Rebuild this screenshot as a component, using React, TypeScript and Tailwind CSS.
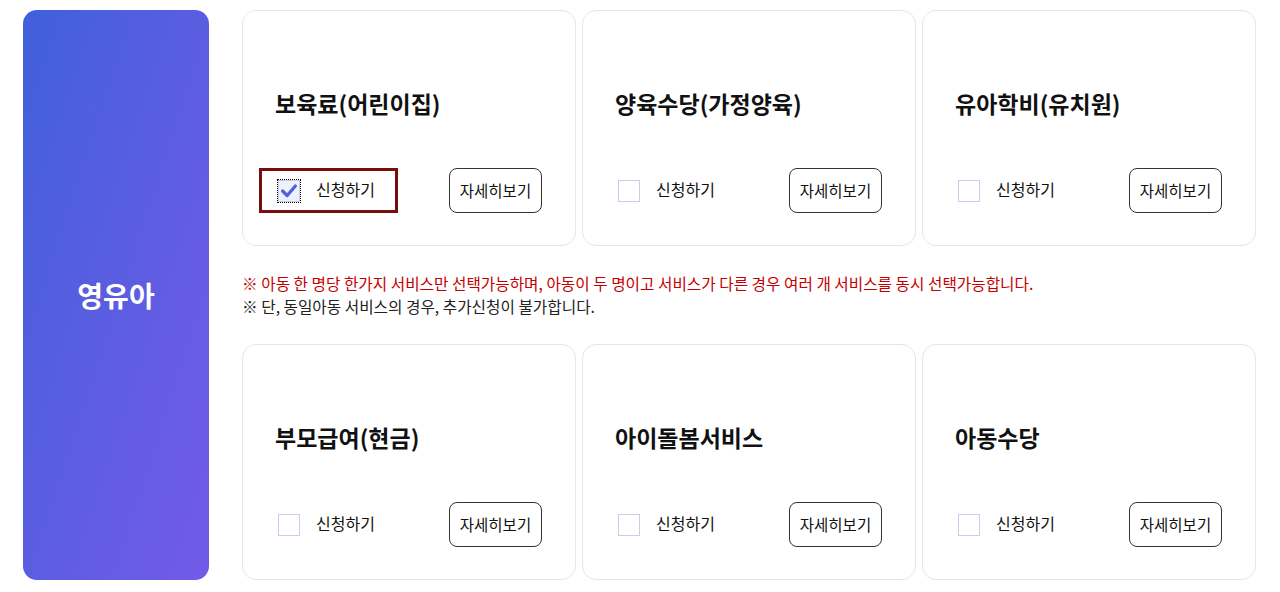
import React, { useState } from "react";

type Service = {
  id: string;
  title: string;
};

const firstRow: Service[] = [
  { id: "care", title: "보육료(어린이집)" },
  { id: "home", title: "양육수당(가정양육)" },
  { id: "kinder", title: "유아학비(유치원)" },
];

const secondRow: Service[] = [
  { id: "parent", title: "부모급여(현금)" },
  { id: "sitter", title: "아이돌봄서비스" },
  { id: "child", title: "아동수당" },
];

const CheckMark = () => (
  <svg viewBox="0 0 22 22" className="w-[22px] h-[22px]">
    <path
      d="M4 11 L9 16 L18 5.5"
      fill="none"
      stroke="#4a63dc"
      strokeWidth="3.6"
      strokeLinecap="round"
      strokeLinejoin="round"
    />
  </svg>
);

const ServiceCard = ({
  service,
  checked,
  focused,
  onToggle,
}: {
  service: Service;
  checked: boolean;
  focused: boolean;
  onToggle: (id: string) => void;
}) => (
  <div className="w-[334px] h-[236px] bg-white border border-[#e6e6e6] rounded-[14px] flex flex-col pt-[76px] pl-[16px] pr-[33px]">
    <h3 className="h-[32px] pl-[16px] text-[23px] leading-[32px] font-bold text-[#111]">
      {service.title}
    </h3>
    <div className="mt-[49px] flex items-center justify-between">
      <label
        className={
          focused
            ? "w-[139px] h-[45px] border-[3px] border-[#7b0c0c] flex items-center pl-[16px] gap-[16px] cursor-pointer"
            : "w-[139px] h-[45px] border-[3px] border-transparent flex items-center pl-[16px] gap-[16px] cursor-pointer"
        }
        onClick={() => onToggle(service.id)}
      >
        <span
          className={
            checked
              ? "w-[22px] h-[22px] bg-[#eef0fb] border border-[#c9cdea] outline-1 outline-dotted outline-black flex items-center justify-center"
              : "w-[22px] h-[22px] bg-white border border-[#c9cdea] flex items-center justify-center"
          }
        >
          {checked && <CheckMark />}
        </span>
        <span className="text-[16px] leading-[20px] pb-[3px] text-[#111]">신청하기</span>
      </label>
      <button className="w-[93px] h-[45px] rounded-lg border border-[#333] bg-white text-[15.5px] text-[#111]">
        자세히보기
      </button>
    </div>
  </div>
);

export default function App() {
  const [selected, setSelected] = useState<string[]>(["care"]);

  const toggle = (id: string) =>
    setSelected((prev) =>
      prev.includes(id) ? prev.filter((s) => s !== id) : [...prev, id]
    );

  const renderRow = (row: Service[]) => (
    <div className="flex gap-[6px]">
      {row.map((s) => (
        <ServiceCard
          key={s.id}
          service={s}
          checked={selected.includes(s.id)}
          focused={s.id === "care"}
          onToggle={toggle}
        />
      ))}
    </div>
  );

  return (
    <div className="w-[1280px] h-[592px] bg-white flex pl-[23px] pt-[10px] font-['Noto_Sans_CJK_KR','Noto_Sans',sans-serif]">
      <div className="w-[186px] h-[570px] rounded-[14px] bg-gradient-to-br from-[#3f60d9] to-[#725ae9] flex items-center justify-center">
        <span className="text-white text-[28px] font-bold">영유아</span>
      </div>
      <div className="ml-[33px] flex flex-col">
        {renderRow(firstRow)}
        <div className="mt-[26px] mb-[26px] text-[15.7px] leading-[23px]">
          <p className="text-[#c40000]">
            ※ 아동 한 명당 한가지 서비스만 선택가능하며, 아동이 두 명이고 서비스가 다른 경우 여러 개 서비스를 동시 선택가능합니다.
          </p>
          <p className="text-[#222]">※ 단, 동일아동 서비스의 경우, 추가신청이 불가합니다.</p>
        </div>
        {renderRow(secondRow)}
      </div>
    </div>
  );
}
